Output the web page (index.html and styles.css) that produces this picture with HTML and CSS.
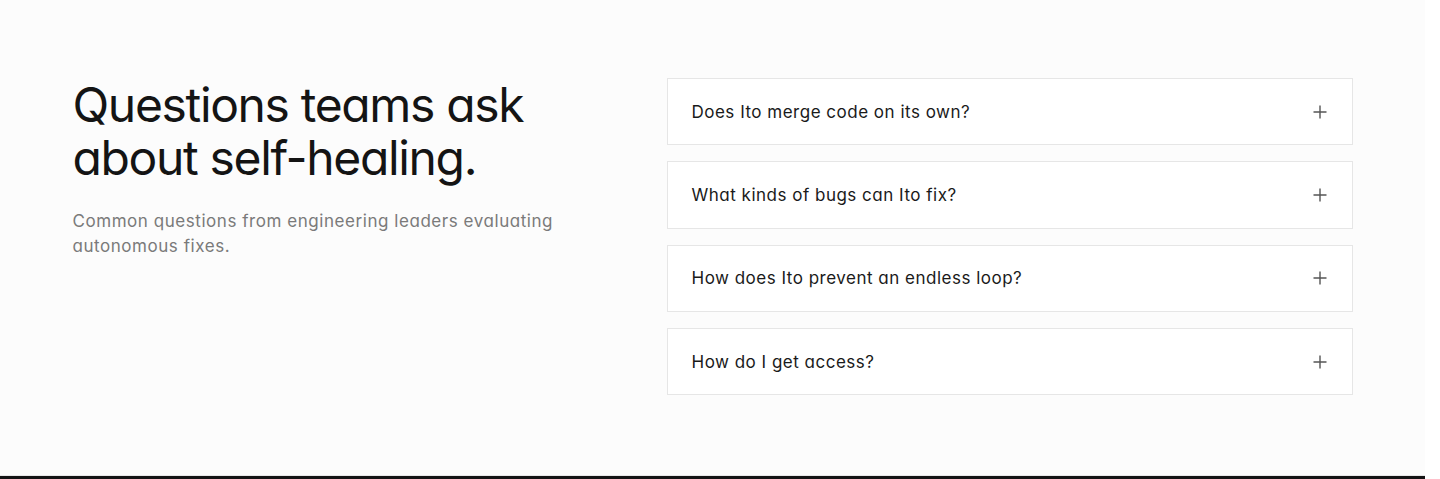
FILE: index.html
```html
<!DOCTYPE html>
<html lang="en">
<head>
<meta charset="utf-8">
<title>FAQ</title>
<link rel="stylesheet" href="styles.css">
</head>
<body>
<div class="page">
  <section class="faq">
    <div class="faq-inner">
      <div class="intro">
        <h2 class="title">Questions teams ask about self-healing.</h2>
        <p class="lead">Common questions from engineering leaders evaluating autonomous fixes.</p>
      </div>
      <div class="list">
        <div class="item"><span class="q">Does Ito merge code on its own?</span><svg class="plus" viewBox="0 0 14 14" width="14" height="14"><path d="M7 0.5v13M0.5 7h13" stroke="currentColor" stroke-width="1.4" fill="none"/></svg></div>
        <div class="item"><span class="q">What kinds of bugs can Ito fix?</span><svg class="plus" viewBox="0 0 14 14" width="14" height="14"><path d="M7 0.5v13M0.5 7h13" stroke="currentColor" stroke-width="1.4" fill="none"/></svg></div>
        <div class="item"><span class="q">How does Ito prevent an endless loop?</span><svg class="plus" viewBox="0 0 14 14" width="14" height="14"><path d="M7 0.5v13M0.5 7h13" stroke="currentColor" stroke-width="1.4" fill="none"/></svg></div>
        <div class="item"><span class="q">How do I get access?</span><svg class="plus" viewBox="0 0 14 14" width="14" height="14"><path d="M7 0.5v13M0.5 7h13" stroke="currentColor" stroke-width="1.4" fill="none"/></svg></div>
      </div>
    </div>
  </section>
  <footer class="footer"></footer>
</div>
</body>
</html>
```

FILE: styles.css
```css
html, body {
  margin: 0;
  padding: 0;
  background: #ffffff;
}
body {
  font-family: Inter, "Noto Sans", sans-serif;
  font-feature-settings: "cv11" 1;
  color: #141414;
}
.page {
  width: 1425px;
  background: #fcfcfc;
}
.faq {
  padding: 78px 0 80px;
  border-bottom: 1px solid #e8e8e8;
}
.faq-inner {
  width: 1280px;
  margin: 0 auto;
  display: grid;
  grid-template-columns: 1fr 686px;
  column-gap: 96px;
  align-items: start;
}
.title {
  margin: 0;
  font-size: 48px;
  font-weight: 400;
  line-height: 53px;
  letter-spacing: -0.028em;
  color: #141414;
  max-width: 480px;
}
.lead {
  margin: 25px 0 0;
  font-size: 17px;
  line-height: 25px;
  color: #7a7a7a;
  letter-spacing: 0.55px;
  max-width: 500px;
}
.list {
  display: flex;
  flex-direction: column;
  gap: 16px;
}
.item {
  display: flex;
  align-items: center;
  justify-content: space-between;
  height: 67.33px;
  box-sizing: border-box;
  padding: 0 25px 0 24px;
  background: #ffffff;
  border: 1px solid #e6e6e6;
}
.q {
  font-size: 17px;
  letter-spacing: 0.5px;
  color: #1a1a1a;
}
.plus {
  color: #555555;
  display: block;
}
.footer {
  height: 3px;
  background: #141414;
}
```
